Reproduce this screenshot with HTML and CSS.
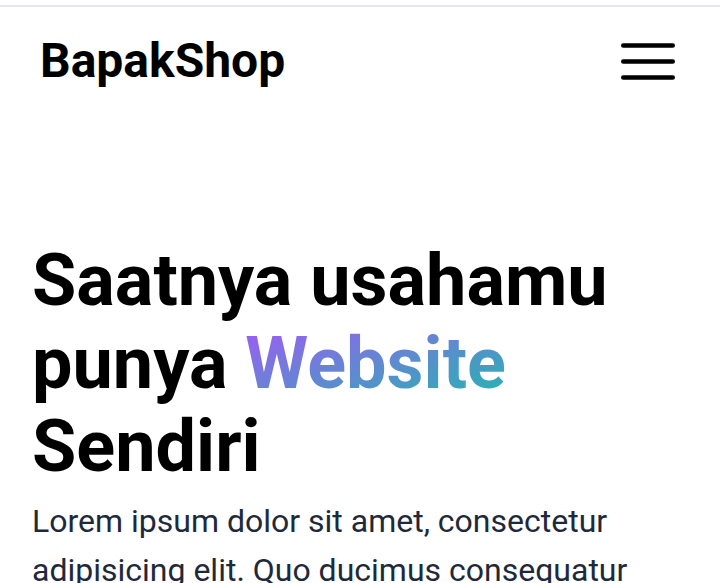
FILE: index.html
```html
<!DOCTYPE html>
<html lang="id">
<head>
<meta charset="utf-8">
<title>BapakShop</title>
<link rel="stylesheet" href="styles.css">
</head>
<body>
<div class="topline"></div>
<header class="nav">
  <a class="logo" href="#">BapakShop</a>
  <button class="menu" aria-label="Menu">
    <svg width="54" height="37" viewBox="0 0 54 37" aria-hidden="true">
      <g stroke="#000" stroke-width="4.5" stroke-linecap="round">
        <line x1="2.25" y1="2.5" x2="51.75" y2="2.5"/>
        <line x1="2.25" y1="18.5" x2="51.75" y2="18.5"/>
        <line x1="2.25" y1="34.5" x2="51.75" y2="34.5"/>
      </g>
    </svg>
  </button>
</header>
<main class="hero">
  <h1 class="title">Saatnya usahamu punya <span class="grad">Website</span> Sendiri</h1>
  <p class="lead">Lorem ipsum dolor sit amet, consectetur adipisicing elit. Quo ducimus consequatur reprehenderit.</p>
</main>
</body>
</html>
```
FILE: styles.css
```css
html, body {
  margin: 0;
  padding: 0;
  background: #fff;
}
body {
  font-family: Roboto, "Liberation Sans", sans-serif;
  color: #000;
}
.topline {
  margin-top: 5px;
  height: 2px;
  background: #e5e7eb;
}
.nav {
  display: flex;
  justify-content: space-between;
  align-items: center;
  padding: 22px 45px 0 40px;
  height: 64px;
}
.logo {
  font-size: 48px;
  line-height: 64px;
  font-weight: 700;
  color: #000;
  text-decoration: none;
}
.menu {
  border: 0;
  background: none;
  padding: 0;
  display: flex;
  cursor: pointer;
}
.hero {
  padding: 146px 32px 0 32px;
}
.title {
  margin: 0;
  font-size: 72px;
  line-height: 83px;
  font-weight: 700;
  color: #000;
}
.grad {
  background: linear-gradient(to bottom right, #a259f5, #1fb8ad);
  -webkit-background-clip: text;
  background-clip: text;
  color: transparent;
}
.lead {
  margin: 9px 0 0 0;
  font-size: 32px;
  line-height: 49px;
  color: #1e293b;
}
```
